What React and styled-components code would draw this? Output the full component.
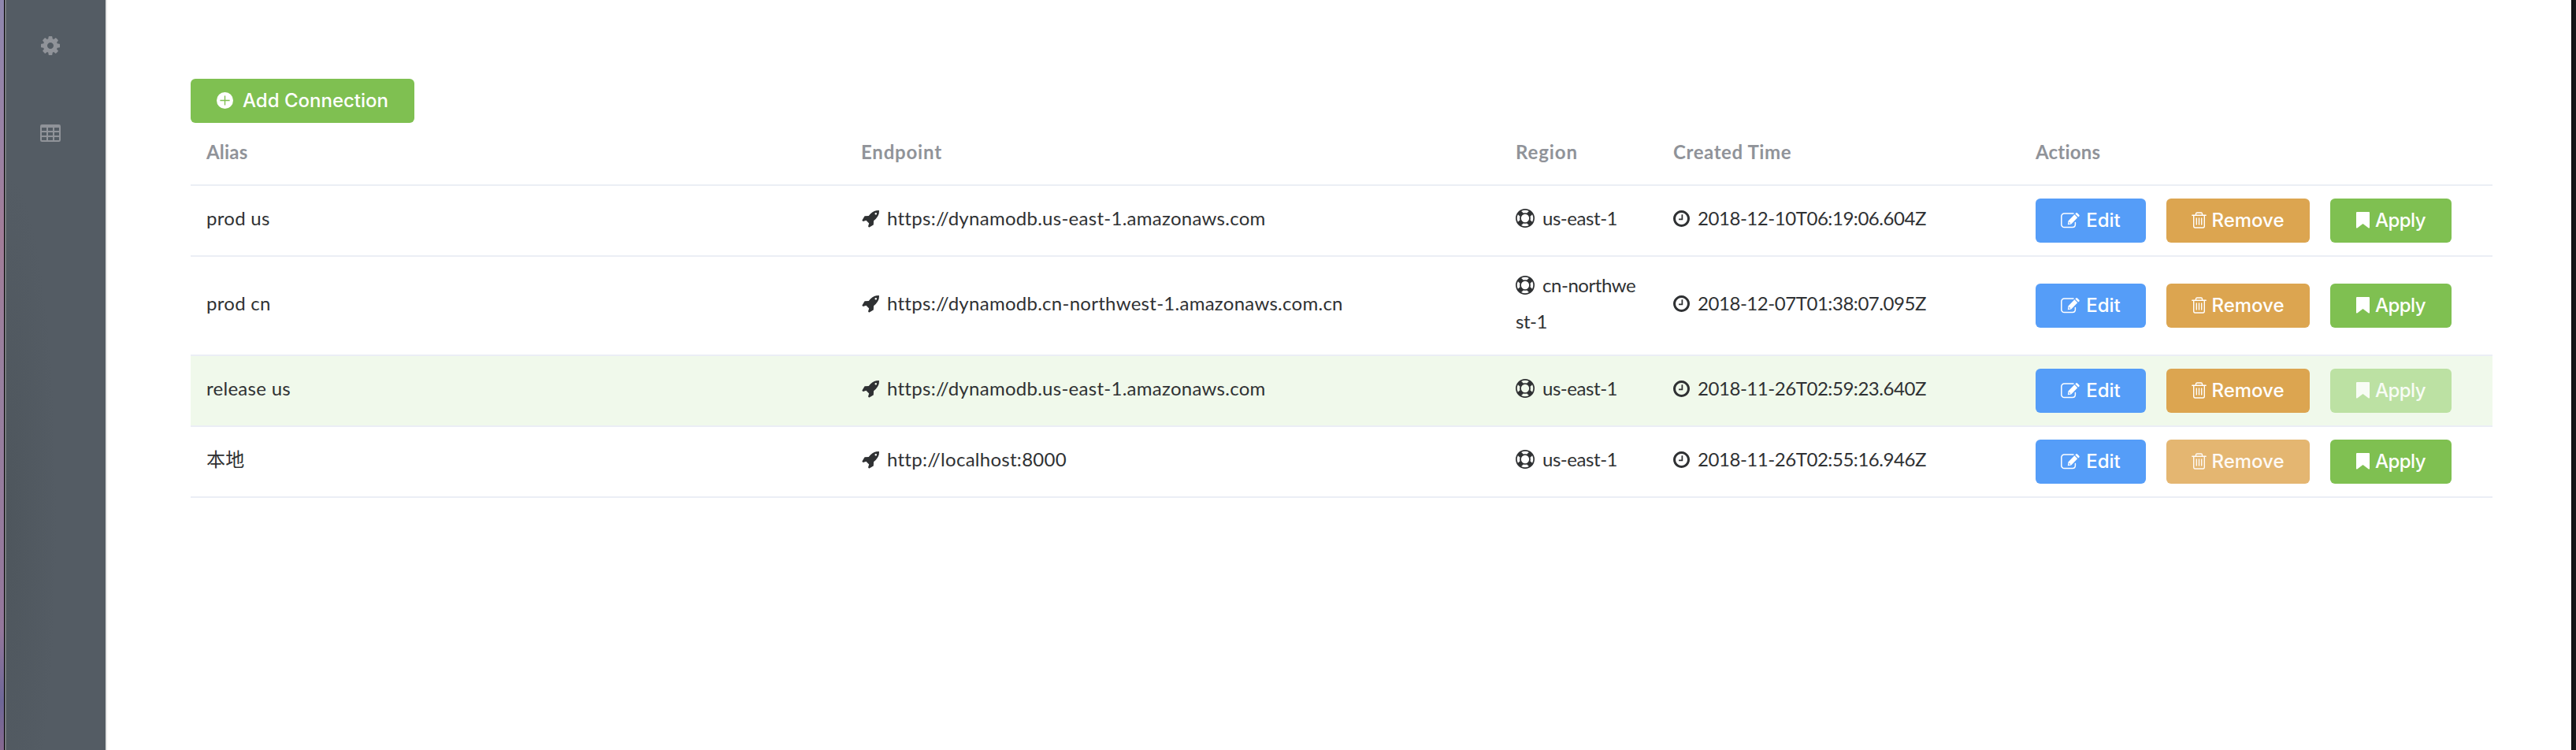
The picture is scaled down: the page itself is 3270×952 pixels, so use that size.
import React from "react";
import styled, { createGlobalStyle, css } from "styled-components";

const Global = createGlobalStyle`
  * { box-sizing: border-box; }
  body { margin: 0; background: #fff; }
`;

const Window = styled.div`
  display: flex;
  height: 952px;
  background: #fff;
  font-family: Lato, "Noto Sans CJK SC", sans-serif;
  font-size: 24px;
  color: #2f3133;
`;

const DesktopEdge = styled.div`
  width: 6px;
  border-right: 1px solid #000;
  background: linear-gradient(#8f87ae 0, #9a82a4 180px, #a27d98 300px, #98809f 480px, #94779b 800px, #6e6798 890px, #86688f 952px);
`;

const Sidebar = styled.nav`
  width: 130px;
  border-left: 2px solid #75797c;
  border-right: 2px solid #e6e6e6;
  background:
    radial-gradient(ellipse 64px 440px at 0 660px, rgba(74, 82, 88, 0.6), rgba(84, 92, 100, 0)),
    #545c64;
  display: flex;
  flex-direction: column;
  align-items: center;
  gap: 1px;
  padding: 3px 14px 0 0;
`;

const NavItem = styled.a`
  height: 110px;
  display: flex;
  align-items: center;
  color: #909399;
`;

const Main = styled.main`
  flex: 1;
  padding: 100px 100px 0 106px;
`;

const RightEdge = styled.div`
  width: 6px;
  border-left: 1px solid #000;
  background: #141617;
`;

const tones = { primary: "#559df8", warning: "#dca550", success: "#7fc051" };

const Button = styled.button`
  height: 56px;
  width: ${(p) => p.$width}px;
  border: 0;
  border-radius: 6px;
  padding: 0 0 1px;
  display: flex;
  align-items: center;
  justify-content: center;
  gap: ${(p) => p.$gap || 7}px;
  background: ${(p) => tones[p.$tone]};
  color: #fff;
  font: 500 24px Inter, sans-serif;
  letter-spacing: ${(p) => p.$spacing || 0}px;
  white-space: nowrap;
  ${(p) =>
    p.$faded &&
    css`
      background: ${p.$tone === "success" ? "#bce1a3" : "#e4b671"};
      color: ${p.$tone === "success" ? "#f8fcf5" : "#fefaf5"};
    `}
`;

const Cell = styled.div`
  padding: 0 20px 6px;
  line-height: 46px;
  letter-spacing: ${(p) => p.$spacing || 0}px;
  word-break: break-all;
`;

const Row = styled.div`
  display: grid;
  grid-template-columns: 831px 831px 200px 460px 600px;
  align-items: center;
  height: ${(p) => p.$height}px;
  border-bottom: 2px solid #ebeef5;
  background: ${(p) => (p.$active ? "#f0f9eb" : "transparent")};
`;

const HeaderRow = styled(Row)`
  color: #909399;
  font-weight: 700;

  ${Cell} {
    padding-bottom: 5px;
  }
`;

const Icon = styled.svg`
  width: ${(p) => p.$w}px;
  height: ${(p) => p.$h}px;
  margin: 0 ${(p) => p.$gap || 0}px 0 ${(p) => p.$inset || 0}px;
  vertical-align: ${(p) => p.$drop || -2}px;
  fill: currentColor;
  flex: none;
`;

const Actions = styled(Cell)`
  display: flex;
  gap: 26px;
  padding-bottom: 0;
`;

const Rocket = () => (
  <Icon $w={22} $h={22} $inset={1} $gap={10} $drop={-3} viewBox="0 0 1664 1664">
    <path d="M1440 320q0-40-28-68t-68-28-68 28-28 68 28 68 68 28 68-28 28-68zM1664 32q0 249-75.500 430.500t-253.500 360.500q-81 80-195 176l-20 379q-2 16-16 26l-384 224q-7 4-16 4-12 0-23-9l-64-64q-13-14-8-32l85-276-281-281-276 85q-3 1-9 1-14 0-23-9l-64-64q-17-19-5-39l224-384q10-14 26-16l379-20q96-114 176-195 188-187 358-258t431-71q14 0 24 9.500t10 22.500z" />
  </Icon>
);

const LifeRing = () => (
  <Icon $w={24} $h={24} $gap={10} $drop={-3} viewBox="0 0 1792 1792">
    <path d="M896 0q182 0 348 71t286 191 191 286 71 348-71 348-191 286-286 191-348 71-348-71-286-191-191-286-71-348 71-348 191-286 286-191 348-71zM896 128q-190 0-361 90l194 194q82-28 167-28t167 28l194-194q-171-90-361-90zM218 1257l194-194q-28-82-28-167t28-167l-194-194q-90 171-90 361t90 361zM896 1664q190 0 361-90l-194-194q-82 28-167 28t-167-28l-194 194q171 90 361 90zM896 1280q159 0 271.500-112.500t112.500-271.500-112.500-271.500-271.500-112.500-271.500 112.500-112.500 271.500 112.500 271.500 271.500 112.500zM1380 1063l194 194q90-171 90-361t-90-361l-194 194q28 82 28 167t-28 167z" />
  </Icon>
);

const Clock = () => (
  <Icon $w={21} $h={21} $gap={10} viewBox="0 0 1536 1536">
    <path d="M896 416v448q0 14-9 23t-23 9h-320q-14 0-23-9t-9-23v-64q0-14 9-23t23-9h224v-352q0-14 9-23t23-9h64q14 0 23 9t9 23zM1312 768q0-148-73-273t-198-198-273-73-273 73-198 198-73 273 73 273 198 198 273 73 273-73 198-198 73-273zM1536 768q0 209-103 385.500t-279.500 279.500-385.500 103-385.500-103-279.500-279.500-103-385.500 103-385.500 279.500-279.500 385.500-103 385.500 103 279.500 279.500 103 385.500z" />
  </Icon>
);

const Cog = () => (
  <Icon $w={24} $h={24} viewBox="128 128 1536 1536">
    <path d="M1152 896q0-106-75-181t-181-75-181 75-75 181 75 181 181 75 181-75 75-181zm512-109v222q0 12-8 23t-20 13l-185 28q-19 54-39 91 35 50 107 138 10 12 10 25t-9 23q-27 37-99 108t-94 71q-12 0-26-9l-138-108q-44 23-91 38-16 136-29 186-7 28-36 28h-222q-14 0-24.500-8.500t-11.500-21.500l-28-184q-49-16-90-37l-141 107q-10 9-25 9-14 0-25-11-126-114-165-168-7-10-7-23 0-12 8-23 15-21 51-66.500t54-70.500q-27-50-41-99l-183-27q-13-2-21-12.500t-8-23.500v-222q0-12 8-23t19-13l186-28q14-46 39-92-40-57-107-138-10-12-10-24 0-10 9-23 26-36 98.500-107.500t94.500-71.500q13 0 26 10l138 107q44-23 91-38 16-136 29-186 7-28 36-28h222q14 0 24.500 8.500t11.500 21.500l28 184q49 16 90 37l142-107q9-9 24-9 13 0 25 10 129 119 165 170 7 8 7 22 0 12-8 23-15 21-51 66.500t-54 70.500q26 50 41 98l183 28q13 2 21 12.500t8 23.500z" />
  </Icon>
);

const TableIcon = () => (
  <Icon $w={26} $h={22} viewBox="0 0 26 22">
    <path
      fillRule="evenodd"
      d="M2.200 0h21.600a2.200 2.200 0 0 1 2.200 2.200v17.600a2.200 2.200 0 0 1-2.200 2.200H2.200A2.200 2.200 0 0 1 0 19.800V2.200A2.200 2.200 0 0 1 2.200 0zM2 4v4h6V4zm8 0v4h6V4zm8 0v4h6V4zM2 10v4h6v-4zm8 0v4h6v-4zm8 0v4h6v-4zM2 16v4h6v-4zm8 0v4h6v-4zm8 0v4h6v-4z"
    />
  </Icon>
);

const PlusCircle = () => (
  <Icon $w={21} $h={21} viewBox="0 0 21 21">
    <path fillRule="evenodd" d="M10.500 0a10.500 10.500 0 1 1 0 21a10.500 10.500 0 0 1 0-21zM9.800 4.400v5.400H4.400v1.400h5.400v5.400h1.400v-5.400h5.400V9.800h-5.400V4.400z" />
  </Icon>
);

const EditIcon = () => (
  <Icon $w={24} $h={20} viewBox="0 0 24 20">
    <path d="M16 .9H4.400A3.600 3.600 0 0 0 .8 4.500v10.400a3.600 3.600 0 0 0 3.600 3.600h10.400A3.600 3.600 0 0 0 18.400 15v-2.500" fill="none" stroke="currentColor" strokeWidth="1.500" strokeLinecap="round" />
    <path fillRule="evenodd" d="M8.800 15.200l.6-4.800L17.400 2.300l3.800 3.900-8 8.200zM10.600 11.600l-.3 2.200 2.100-.3zM18.300 1.400l.9-.9q.9-.8 1.800 0l2.300 2.300q.8.900 0 1.700l-1 .9z" />
  </Icon>
);

const TrashIcon = () => (
  <Icon $w={19} $h={21} viewBox="0 0 19 21">
    <path
      d="M.8 4.200h17.400M5.500 4V2.500Q5.500 1 7 1h5q1.500 0 1.500 1.500V4M2.700 4.500v13.200q0 2.300 1.800 2.300h10q1.800 0 1.800-2.300V4.500M6.300 8v8M9.500 8v8M12.700 8v8"
      fill="none"
      stroke="currentColor"
      strokeWidth="1.400"
      strokeLinecap="round"
    />
  </Icon>
);

const BookmarkIcon = () => (
  <Icon $w={17} $h={21} viewBox="0 0 17 21">
    <path d="M1 0h15q1 0 1 1v18.800q0 1.200-1.200.6L8.500 15 1.200 20.400Q0 21 0 19.800V1q0-1 1-1z" />
  </Icon>
);

const rows = [
  { alias: "prod us", url: "https://dynamodb.us-east-1.amazonaws.com", region: "us-east-1", time: "2018-12-10T06:19:06.604Z", height: 90 },
  { alias: "prod cn", url: "https://dynamodb.cn-northwest-1.amazonaws.com.cn", region: "cn-northwest-1", time: "2018-12-07T01:38:07.095Z", height: 126 },
  { alias: "release us", url: "https://dynamodb.us-east-1.amazonaws.com", region: "us-east-1", time: "2018-11-26T02:59:23.640Z", height: 90, active: true },
  { alias: "本地", url: "http://localhost:8000", region: "us-east-1", time: "2018-11-26T02:55:16.946Z", height: 90, locked: true },
];

export default function App() {
  return (
    <Window>
      <Global />
      <DesktopEdge />
      <Sidebar>
        <NavItem><Cog /></NavItem>
        <NavItem><TableIcon /></NavItem>
      </Sidebar>
      <Main>
        <Button $tone="success" $width={284} $gap={12}>
          <PlusCircle />
          Add Connection
        </Button>
        <HeaderRow $height={80}>
          <Cell $spacing={0.2}>Alias</Cell>
          <Cell $spacing={0.8}>Endpoint</Cell>
          <Cell $spacing={0.9}>Region</Cell>
          <Cell $spacing={0.6}>Created Time</Cell>
          <Cell $spacing={0.2}>Actions</Cell>
        </HeaderRow>
        {rows.map((r) => (
          <Row key={r.time} $height={r.height} $active={r.active}>
            <Cell $spacing={0.28}>{r.alias}</Cell>
            <Cell $spacing={0.27}><Rocket />{r.url}</Cell>
            <Cell $spacing={-0.45}><LifeRing />{r.region}</Cell>
            <Cell $spacing={-0.45}><Clock />{r.time}</Cell>
            <Actions>
              <Button $tone="primary" $width={140} $gap={8}><EditIcon />Edit</Button>
              <Button $tone="warning" $width={182} $gap={6} $faded={r.locked}><TrashIcon />Remove</Button>
              <Button $tone="success" $width={154} $spacing={-0.5} $faded={r.active}><BookmarkIcon />Apply</Button>
            </Actions>
          </Row>
        ))}
      </Main>
      <RightEdge />
    </Window>
  );
}
